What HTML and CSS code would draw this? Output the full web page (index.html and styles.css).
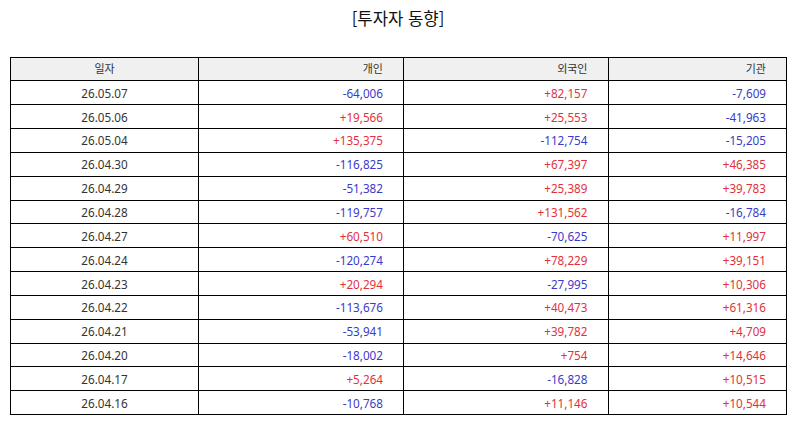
FILE: index.html
```html
<!DOCTYPE html>
<html lang="ko">
<head>
<meta charset="utf-8">
<link rel="stylesheet" href="styles.css">
</head>
<body>
<div class="page">
  <h1 class="title">[투자자 동향]</h1>
  <table class="flow">
    <colgroup>
      <col class="c1"><col class="c2"><col class="c3"><col class="c4">
    </colgroup>
    <thead>
      <tr><th class="date">일자</th><th>개인</th><th>외국인</th><th>기관</th></tr>
    </thead>
    <tbody>
      <tr><td class="date">26.05.07</td><td class="dn">-64,006</td><td class="up">+82,157</td><td class="dn">-7,609</td></tr>
      <tr><td class="date">26.05.06</td><td class="up">+19,566</td><td class="up">+25,553</td><td class="dn">-41,963</td></tr>
      <tr><td class="date">26.05.04</td><td class="up">+135,375</td><td class="dn">-112,754</td><td class="dn">-15,205</td></tr>
      <tr><td class="date">26.04.30</td><td class="dn">-116,825</td><td class="up">+67,397</td><td class="up">+46,385</td></tr>
      <tr><td class="date">26.04.29</td><td class="dn">-51,382</td><td class="up">+25,389</td><td class="up">+39,783</td></tr>
      <tr><td class="date">26.04.28</td><td class="dn">-119,757</td><td class="up">+131,562</td><td class="dn">-16,784</td></tr>
      <tr><td class="date">26.04.27</td><td class="up">+60,510</td><td class="dn">-70,625</td><td class="up">+11,997</td></tr>
      <tr><td class="date">26.04.24</td><td class="dn">-120,274</td><td class="up">+78,229</td><td class="up">+39,151</td></tr>
      <tr><td class="date">26.04.23</td><td class="up">+20,294</td><td class="dn">-27,995</td><td class="up">+10,306</td></tr>
      <tr><td class="date">26.04.22</td><td class="dn">-113,676</td><td class="up">+40,473</td><td class="up">+61,316</td></tr>
      <tr><td class="date">26.04.21</td><td class="dn">-53,941</td><td class="up">+39,782</td><td class="up">+4,709</td></tr>
      <tr><td class="date">26.04.20</td><td class="dn">-18,002</td><td class="up">+754</td><td class="up">+14,646</td></tr>
      <tr><td class="date">26.04.17</td><td class="up">+5,264</td><td class="dn">-16,828</td><td class="up">+10,515</td></tr>
      <tr><td class="date">26.04.16</td><td class="dn">-10,768</td><td class="up">+11,146</td><td class="up">+10,544</td></tr>
    </tbody>
  </table>
</div>
</body>
</html>
```
FILE: styles.css
```css
html, body {
  margin: 0;
  padding: 0;
  background: #ffffff;
}
body {
  font-family: "Noto Sans", "Noto Sans CJK KR", sans-serif;
  color: #333;
}
.page {
  padding: 0 8px 0 10px;
}
.title {
  margin: 0;
  padding-top: 6px;
  height: 50px;
  box-sizing: border-box;
  text-align: center;
  font-family: "Noto Sans CJK KR", sans-serif;
  font-size: 16.7px;
  font-weight: 400;
  line-height: 24px;
  color: #111;
}
.flow {
  border-collapse: collapse;
  table-layout: fixed;
  width: 776px;
  font-size: 11.7px;
  margin-top: 6.5px;
}
.c1 { width: 188px; }
.c2 { width: 205px; }
.c3 { width: 204.5px; }
.c4 { width: 178.5px; }
.flow th, .flow td {
  border: 1px solid #000;
  height: 23.85px;
  padding: 0 20px 0 4px;
  text-align: right;
  box-sizing: border-box;
  line-height: 14px;
  vertical-align: middle;
  font-weight: 400;
}
.flow th {
  background: #f0f0f0;
  color: #333;
  font-size: 11px;
}
.flow .date {
  text-align: center;
  padding: 0;
  color: #333;
}
.up { color: #e3313b; }
.dn { color: #3a3acb; }
```
